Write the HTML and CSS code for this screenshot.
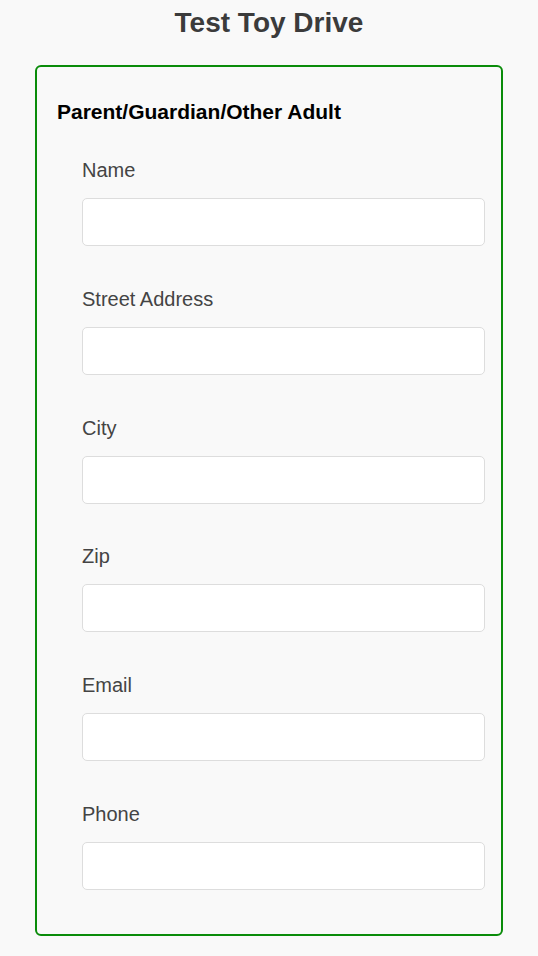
FILE: index.html
```html
<!DOCTYPE html>
<html lang="en">
<head>
<meta charset="utf-8">
<title>Test Toy Drive</title>
<link rel="stylesheet" href="styles.css">
</head>
<body>
<h1 class="title">Test Toy Drive</h1>
<form class="panel">
  <h2 class="panel-heading">Parent/Guardian/Other Adult</h2>
  <div class="fields">
    <div class="field"><label class="field-label" for="name">Name</label><input class="field-input" id="name" type="text"></div>
    <div class="field"><label class="field-label" for="street">Street Address</label><input class="field-input" id="street" type="text"></div>
    <div class="field"><label class="field-label" for="city">City</label><input class="field-input" id="city" type="text"></div>
    <div class="field"><label class="field-label" for="zip">Zip</label><input class="field-input" id="zip" type="text"></div>
    <div class="field"><label class="field-label" for="email">Email</label><input class="field-input" id="email" type="text"></div>
    <div class="field"><label class="field-label" for="phone">Phone</label><input class="field-input" id="phone" type="text"></div>
  </div>
</form>
</body>
</html>
```
FILE: styles.css
```css
html, body {
  margin: 0;
  padding: 0;
  background: #f9f9f9;
  font-family: "Liberation Sans", Arial, sans-serif;
}
.title {
  margin: 7px 0 0;
  font-size: 28px;
  line-height: 31px;
  font-weight: bold;
  color: #3b3b3b;
  text-align: center;
}
.panel {
  margin: 27px 35px 0;
  border: 2px solid #0a8c0a;
  border-radius: 6px;
  padding: 33px 16px 44px 20px;
}
.panel-heading {
  margin: 0;
  font-size: 21px;
  line-height: 24px;
  font-weight: bold;
  color: #000;
}
.fields {
  display: flex;
  flex-direction: column;
  gap: 41.8px;
  margin-top: 35px;
  padding-left: 25px;
}
.field {
  display: flex;
  flex-direction: column;
  gap: 16px;
}
.field-label {
  font-size: 20px;
  line-height: 23px;
  color: #444;
}
.field-input {
  box-sizing: border-box;
  width: 100%;
  height: 48px;
  margin: 0;
  border: 1px solid #ddd;
  border-radius: 5px;
  background: #fff;
  font-size: 16px;
  padding: 0 10px;
}
```
